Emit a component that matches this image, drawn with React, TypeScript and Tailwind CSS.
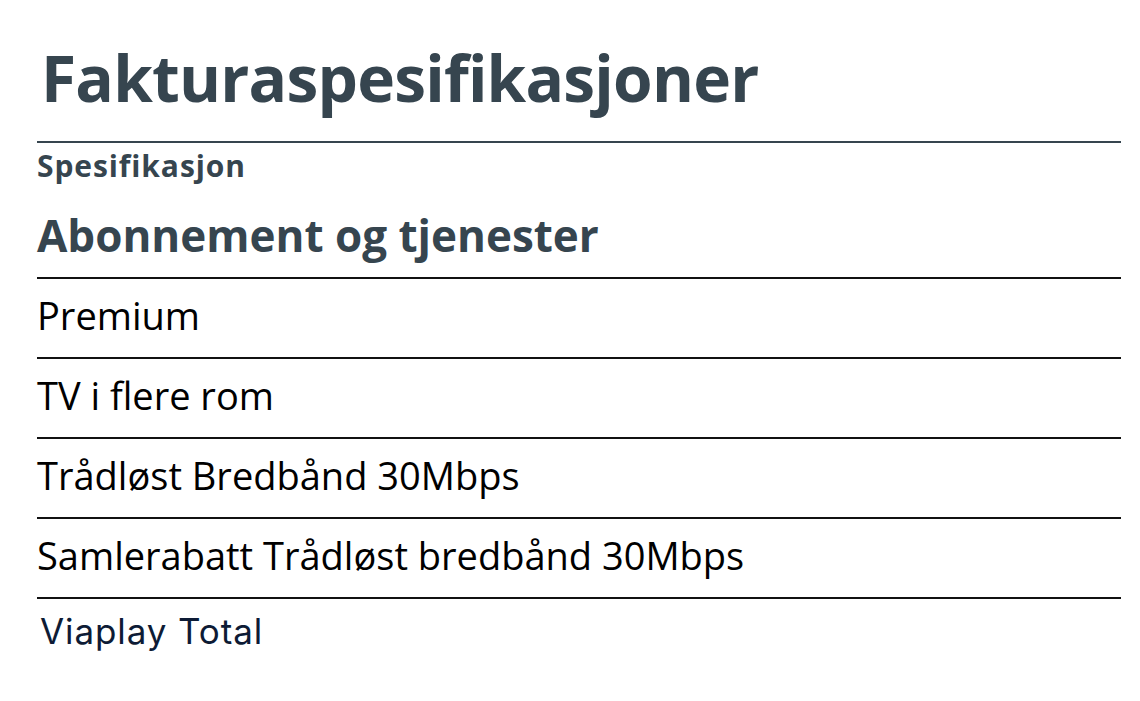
import React from "react";

const rows = [
  "Premium",
  "TV i flere rom",
  "Trådløst Bredbånd 30Mbps",
  "Samlerabatt Trådløst bredbånd 30Mbps",
];

export default function App() {
  return (
    <div className="min-h-[701px] w-[1140px] bg-white" style={{ fontFamily: "'Open Sans', Lato, sans-serif" }}>
      <div className="ml-[37px] w-[1084px]">
        <div className="pt-[46px]">
          <h1 className="ml-[4px] text-[64px] font-bold leading-[64px] tracking-[-0.8px] text-[#36454f]">
            Fakturaspesifikasjoner
          </h1>
        </div>
        <div className="mt-[31px] border-t-2 border-[#36454f]" />
        <div className="mt-[8px] text-[30px] font-bold leading-[30px] tracking-[0.9px] text-[#36454f]">Spesifikasjon</div>
        <h2 className="mt-[32px] text-[44px] font-bold leading-[44px] text-[#36454f]">Abonnement og tjenester</h2>
        <div className="mt-[20px]">
          {rows.map((r) => (
            <div key={r} className="h-[80px] border-t-2 border-[#111111] pt-[17px] text-[38px] leading-[38px] text-black">
              {r}
            </div>
          ))}
          <div
            className="h-[80px] border-t-2 border-[#111111] pl-[3px] pt-[15px] text-[35px] leading-[35px] tracking-[0.9px] text-[#0d1b35]"
            style={{ fontFamily: "Inter, sans-serif" }}
          >
            Viaplay Total
          </div>
        </div>
      </div>
    </div>
  );
}
